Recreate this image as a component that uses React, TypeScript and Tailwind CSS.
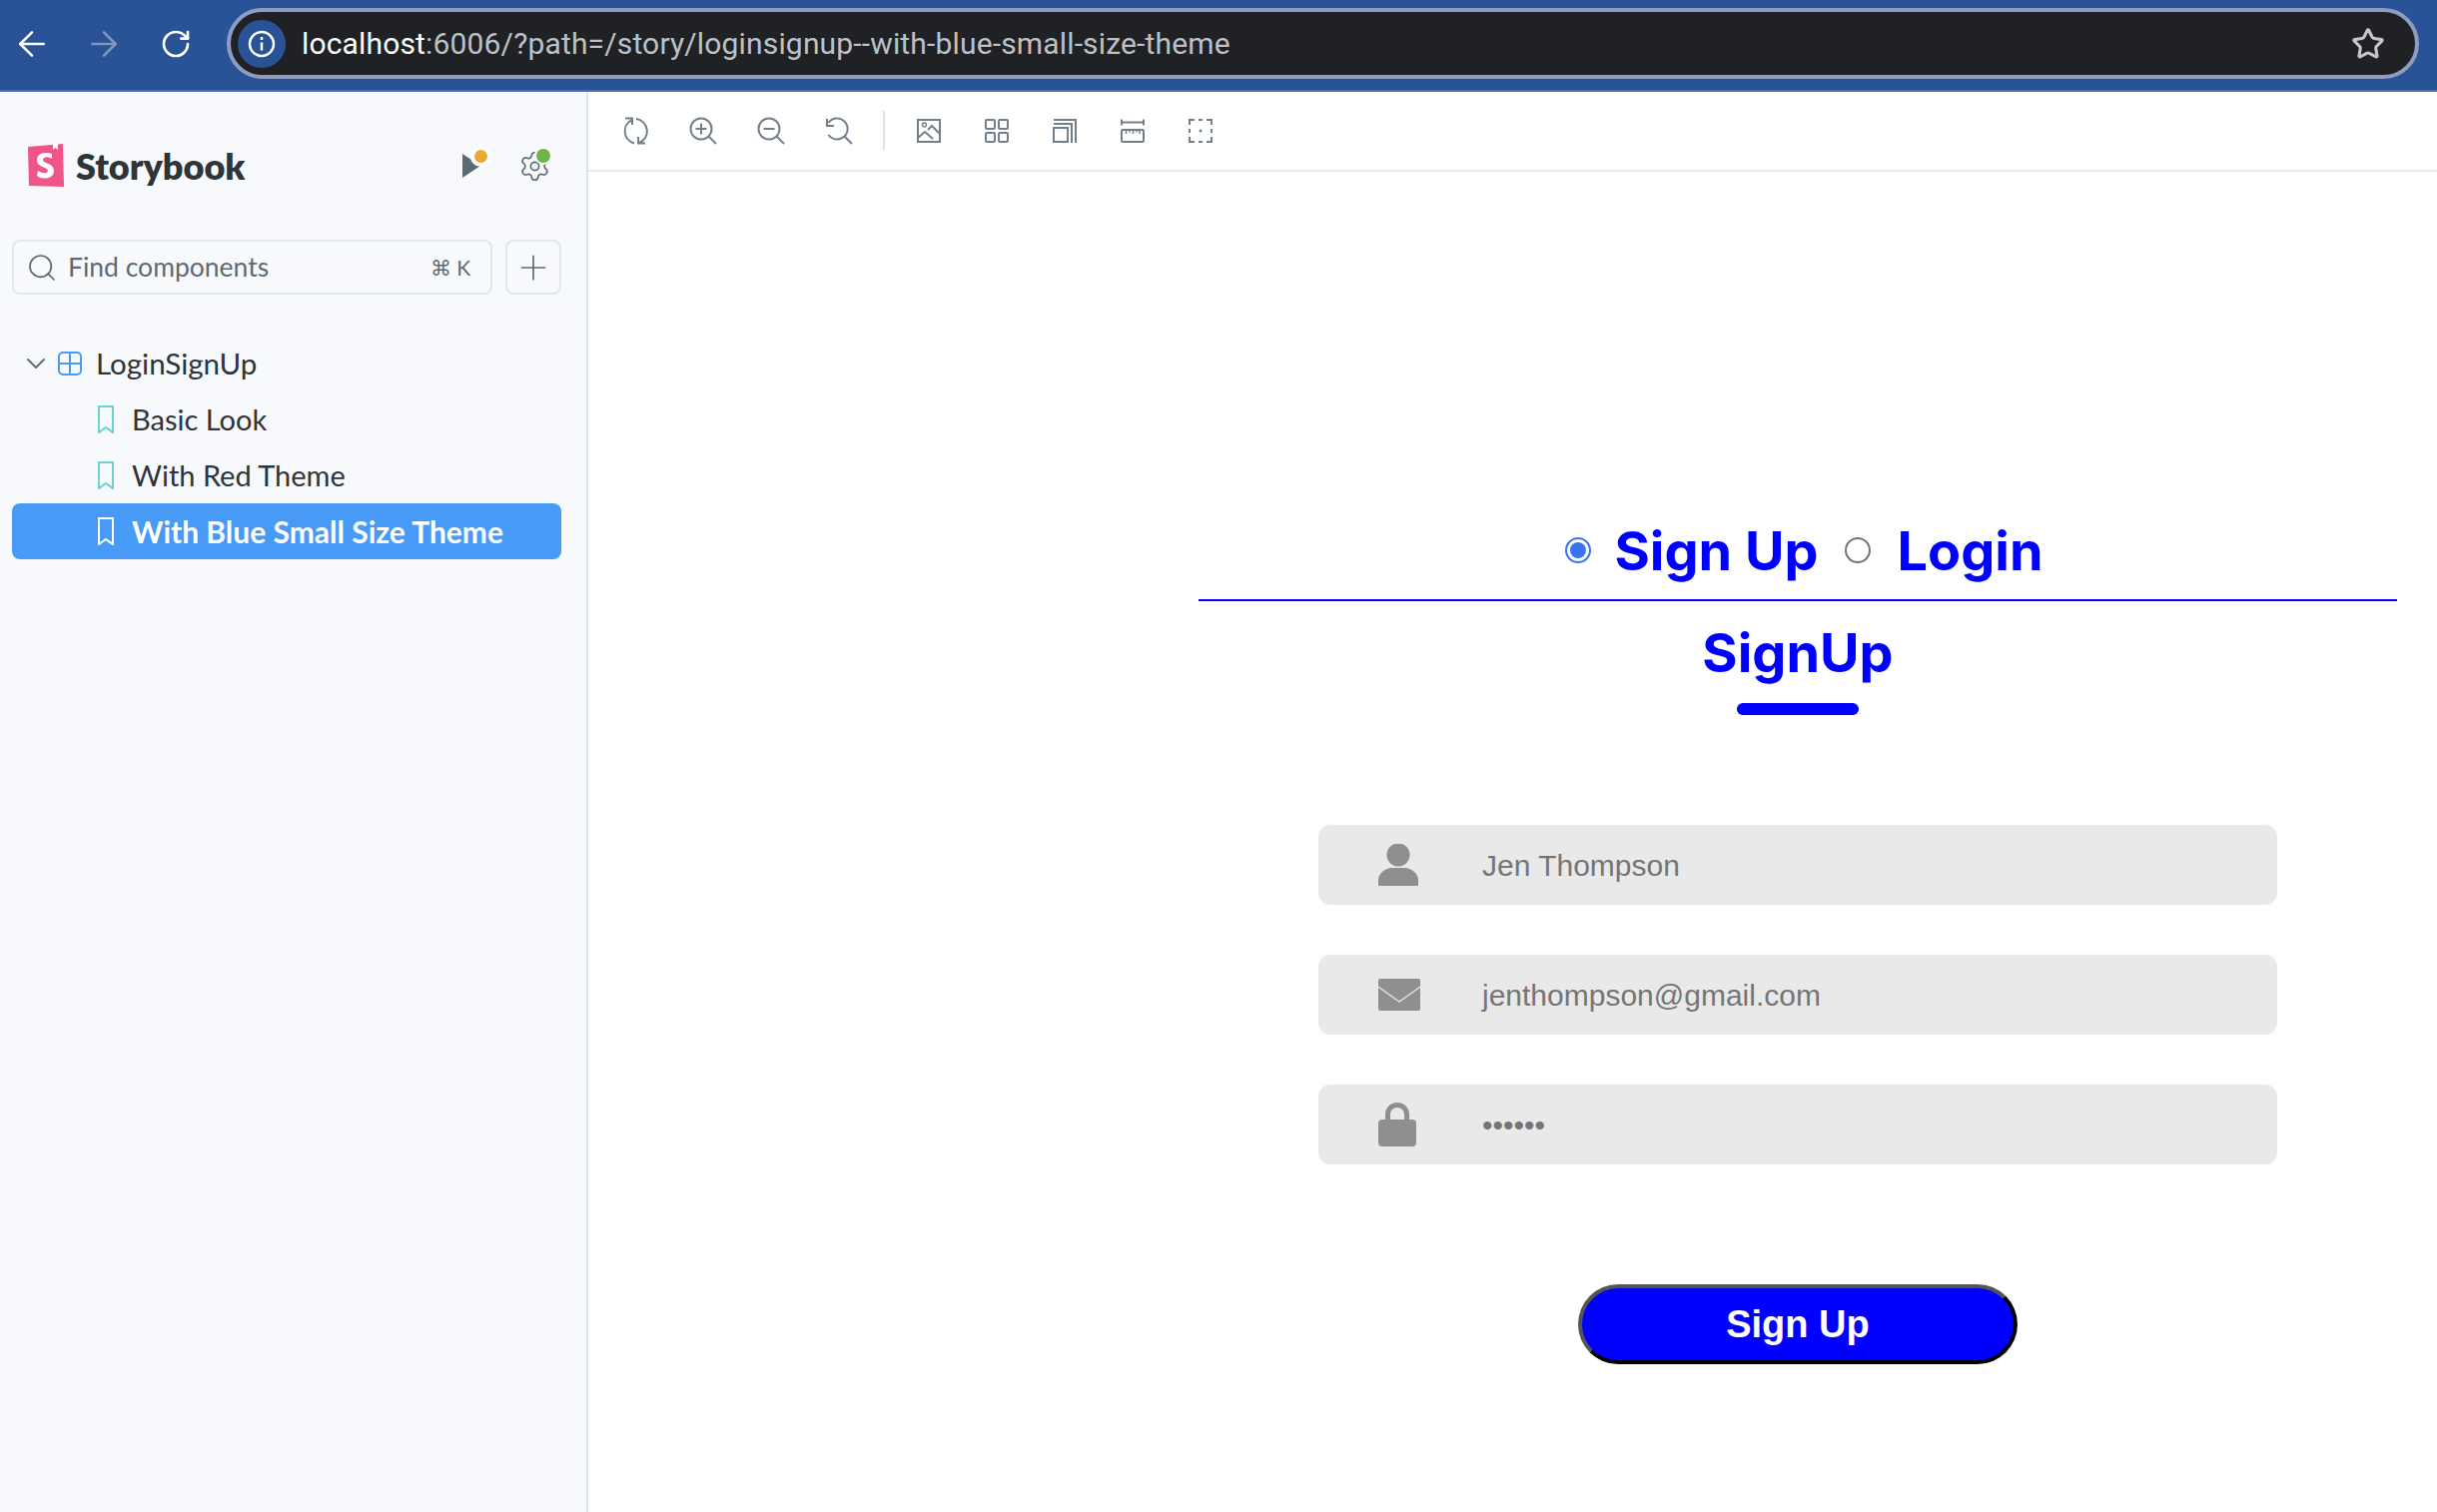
import React from "react";
import { ArrowLeft, ArrowRight, RotateCw, Star, Search, Plus, ChevronDown, Settings } from "lucide-react";

const sans = "font-['Lato','Noto_Sans',sans-serif]";

const Bookmark = ({ color }: { color: string }) => (
  <svg width="16" height="28" viewBox="0 0 16 28" fill="none" className="shrink-0">
    <path d="M1 1h14v26l-7-5-7 5z" stroke={color} strokeWidth="2" />
  </svg>
);

const stories = [
  { name: "Basic Look", active: false },
  { name: "With Red Theme", active: false },
  { name: "With Blue Small Size Theme", active: true },
];

const ToolIcon = ({ children }: { children: React.ReactNode }) => (
  <svg width="28" height="28" viewBox="0 0 28 28" fill="none" stroke="#73808c" strokeWidth="2" className="shrink-0">
    {children}
  </svg>
);

const Lens = ({ children }: { children?: React.ReactNode }) => (
  <>
    <circle cx="12" cy="12" r="10.5" />
    <path d="M19.500 19.500L27 27" />
    {children}
  </>
);

const Sidebar = () => (
  <aside className={`w-[589px] shrink-0 border-r-2 border-[#dde4ec] bg-[#f7f9fd] ${sans}`}>
    <div className="flex items-center pl-7 pr-[38px] pt-[52px]">
      <svg width="36" height="44" viewBox="0 0 36 44" className="shrink-0">
        <path d="M0 3L35 0l1 43-35-1z" fill="#f0558a" />
        <path d="M25 0l5-.5V6l-2.500-2L25 6z" fill="#fff" />
        <path d="M24 15c-2-2-9-3-9 1 0 4 11 3 11 11 0 9-13 9-17 5l1-5c3 2 9 4 10 0 0-4-11-3-11-11 0-8 11-8 15-6z" fill="#fff" />
      </svg>
      <span className="ml-3 text-[36px] leading-[44px] font-extrabold text-[#2e3438]">Storybook</span>
      <div className="relative ml-auto h-[24px] w-[18px]">
        <svg width="18" height="24" viewBox="0 0 18 24" className="block"><path d="M0 0l18 12L0 24z" fill="#5e6a73" /></svg>
        <span className="absolute left-[8px] -top-[8px] h-[21px] w-[21px] rounded-full border-[4px] border-white bg-[#eea72f]" />
      </div>
      <div className="relative ml-10 h-[28px] w-[28px]">
        <Settings size={33} strokeWidth={1.2} color="#5e6a73" className="-m-[2.5px]" />
        <span className="absolute left-[14px] -top-[5px] h-[18px] w-[18px] rounded-full border-[2px] border-[#f7f9fd] bg-[#70b548]" />
      </div>
    </div>

    <div className="mt-[52px] flex gap-[13px] pl-3 pr-[25px]">
      <div className="flex h-[55px] w-[482px] items-center rounded-lg border-2 border-[#dde8f0] pl-[12px] pr-5">
        <Search size={32} strokeWidth={1.3} color="#5e6a73" />
        <span className="ml-[10px] text-[26.5px] text-[#5e6a73]">Find components</span>
        <span className="ml-auto text-[21px] text-[#5e6a73]">⌘ K</span>
      </div>
      <div className="flex h-[55px] w-[56px] items-center justify-center rounded-lg border-2 border-[#dde8f0]">
        <Plus size={40} strokeWidth={1} color="#5e6a73" />
      </div>
    </div>

    <div className="mt-[41px] pl-3 pr-[25px] text-[29px] text-[#2e3438]">
      <div className="flex h-[56px] items-center pl-2">
        <ChevronDown size={32} strokeWidth={1.4} color="#5e6a73" />
        <svg width="24" height="24" viewBox="0 0 24 24" fill="none" stroke="#479af6" strokeWidth="2" className="ml-[6px]">
          <rect x="1" y="1" width="22" height="22" rx="4" />
          <path d="M12 1v22M1 12h22" />
        </svg>
        <span className="ml-[14px] text-[29.5px]">LoginSignUp</span>
      </div>
      {stories.map(({ name, active }) => (
        <div
          key={name}
          className={`flex h-[56px] items-center rounded-lg pl-[86px] ${active ? "bg-[#479af6] text-[30px] font-bold text-white" : ""}`}
        >
          <Bookmark color={active ? "#ffffff" : "#66d6cd"} />
          <span className="ml-[18px]">{name}</span>
        </div>
      ))}
    </div>
  </aside>
);

const Toolbar = () => (
  <div className="flex h-[80px] items-center border-b-2 border-[#e3e8ed] pl-[33px]">
    <div className="flex gap-[40px]">
      <ToolIcon>
        <path d="M11 3A12.500 12.500 0 0 0 13 26.500M15 2A12.500 12.500 0 0 1 18 26M4 1.500h7V8M17 20v6.500h7" />
      </ToolIcon>
      <ToolIcon><Lens><path d="M12 6.500v11M6.500 12h11" /></Lens></ToolIcon>
      <ToolIcon><Lens><path d="M6.500 12h11" /></Lens></ToolIcon>
      <ToolIcon>
        <path d="M3.500 6A10.500 10.500 0 1 1 3.500 18M19.500 19.500L27 27M2 2v7h7" />
      </ToolIcon>
    </div>
    <div className="mx-[30px] h-[40px] w-[2px] bg-[#dde4ea]" />
    <div className="flex gap-[40px]">
      <ToolIcon>
        <rect x="3" y="3" width="22" height="22" />
        <circle cx="9.500" cy="8" r="2" strokeWidth="1.500" />
        <path d="M3 21l7-6 8 7M13 13l4-4 8 8" />
      </ToolIcon>
      <ToolIcon>
        <rect x="3" y="3" width="9" height="9" rx="1" />
        <rect x="16" y="3" width="9" height="9" rx="1" />
        <rect x="3" y="16" width="9" height="9" rx="1" />
        <rect x="16" y="16" width="9" height="9" rx="1" />
      </ToolIcon>
      <ToolIcon>
        <rect x="3" y="11" width="14" height="14" />
        <path d="M3 7h18v19M3 3h22v23" />
      </ToolIcon>
      <ToolIcon>
        <path d="M3 5.500h22M3 2.500v6M25 2.500v6" />
        <rect x="3" y="13" width="22" height="12" rx="1" />
        <path d="M7.500 13v4M11 13v2.500M14.500 13v4M18 13v2.500M21 13v4" strokeWidth="1.500" />
      </ToolIcon>
      <ToolIcon>
        <path d="M3 8V3h5M12 3h4M20 3h5v5M25 12v4M25 20v5h-5M16 25h-4M8 25H3v-5M3 16v-4" />
        <circle cx="14" cy="14" r="1.500" fill="#73808c" stroke="none" />
      </ToolIcon>
    </div>
  </div>
);

const fields = [
  {
    text: "Jen Thompson",
    icon: (
      <svg width="40" height="42" viewBox="0 0 40 42" fill="#8f8f8f">
        <circle cx="20" cy="11" r="11.500" />
        <path d="M0 42v-6C0 29 8 24 13 24h14c5 0 13 5 13 12v6z" />
      </svg>
    ),
  },
  {
    text: "jenthompson@gmail.com",
    icon: (
      <svg width="42" height="32" viewBox="0 0 42 32" fill="none">
        <rect width="42" height="32" rx="2" fill="#8f8f8f" />
        <path d="M0 8l21 15 21-15" stroke="#dcdcdc" strokeWidth="1.500" />
      </svg>
    ),
  },
  {
    text: "••••••",
    icon: (
      <svg width="38" height="44" viewBox="0 0 38 44" fill="#8f8f8f">
        <path d="M7 18v-6C7 5 12 0 19 0s12 5 12 12v6h-5v-6c0-4-3-7-7-7s-7 3-7 7v6z" />
        <rect x="0" y="17" width="38" height="27" rx="4" />
      </svg>
    ),
  },
];

const RadioDot = ({ checked }: { checked: boolean }) =>
  checked ? (
    <span className="flex h-[26px] w-[26px] shrink-0 items-center justify-center rounded-full border-2 border-[#3b73ef]">
      <span className="h-[16px] w-[16px] rounded-full bg-[#3b73ef]" />
    </span>
  ) : (
    <span className="block h-[26px] w-[26px] shrink-0 rounded-full border-2 border-[#767676]" />
  );

const SignupForm = () => (
  <div className="w-[1200px] font-['Liberation_Sans',Arial,sans-serif]">
    <div className="flex h-[87px] items-center justify-center border-b-2 border-[#0000ff] pb-[13px] pl-[13px] font-['Inter',sans-serif] text-[54px] font-bold text-[#0000ff]">
      <RadioDot checked />
      <span className="ml-[23px]">Sign Up</span>
      <span className="ml-[26px]"><RadioDot checked={false} /></span>
      <span className="ml-[27px]">Login</span>
    </div>
    <div className="mt-[17px] flex flex-col items-center">
      <h1 className="font-['Inter',sans-serif] text-[54px] leading-[70px] font-bold text-[#0000ff]">SignUp</h1>
      <div className="mt-[15px] h-[12px] w-[122px] rounded-md bg-[#0000ff]" />
    </div>
    <div className="mt-[110px] flex flex-col items-center gap-[50px]">
      {fields.map(({ text, icon }) => (
        <div key={text} className="flex h-[80px] w-[960px] items-center rounded-xl bg-[#e9e9e9] pl-[60px]">
          <span className="flex w-[104px] shrink-0 items-center">{icon}</span>
          <span className="text-[30px] text-[#757575]">{text}</span>
        </div>
      ))}
    </div>
    <div className="mt-[120px] flex justify-center">
      <button className="h-[80px] w-[440px] rounded-full border-4 border-t-[#555555] border-r-black border-b-black border-l-[#555555] bg-[#0000ff] text-[38px] font-bold text-white">
        Sign Up
      </button>
    </div>
  </div>
);

export default function App() {
  return (
    <div className="flex h-[1514px] w-[2440px] flex-col overflow-hidden bg-white">
      <header className="flex h-[92px] shrink-0 items-center border-b-2 border-[#4a73ad] bg-[#2a5297] pb-[3px] pl-3 pr-[18px]">
        <ArrowLeft size={40} color="#ffffff" strokeWidth={1.5} />
        <ArrowRight size={40} color="#7f97c0" strokeWidth={1.5} className="ml-[32px]" />
        <RotateCw size={32} color="#ffffff" strokeWidth={2} className="ml-[36px]" />
        <div className="ml-[35px] flex h-[71px] flex-1 items-center rounded-full border-4 border-[#8c9dbf] bg-[#202124] pl-[7px] pr-[30px]">
          <span className="flex h-[48px] w-[48px] shrink-0 items-center justify-center rounded-full bg-[#2a5297]">
            <svg width="28" height="28" viewBox="0 0 28 28" fill="none" stroke="#fff" strokeWidth="2.500">
              <circle cx="14" cy="14" r="12" />
              <path d="M14 12.500v8M14 7v3" />
            </svg>
          </span>
          <span className="ml-[16px] font-['Roboto',sans-serif] text-[30px] tracking-[0.16px] text-[#bdc1c6] [font-variant-ligatures:none]">
            <span className="text-white">localhost</span>:6006/?path=/story/loginsignup--with-blue-small-size-theme
          </span>
          <Star size={34} color="#c4c7c5" strokeWidth={2.2} className="ml-auto" />
        </div>
      </header>
      <div className="flex min-h-0 flex-1">
        <Sidebar />
        <main className="flex min-w-0 flex-1 flex-col">
          <Toolbar />
          <div className="flex flex-1 justify-end pr-10 pt-[343px]">
            <SignupForm />
          </div>
        </main>
      </div>
    </div>
  );
}
